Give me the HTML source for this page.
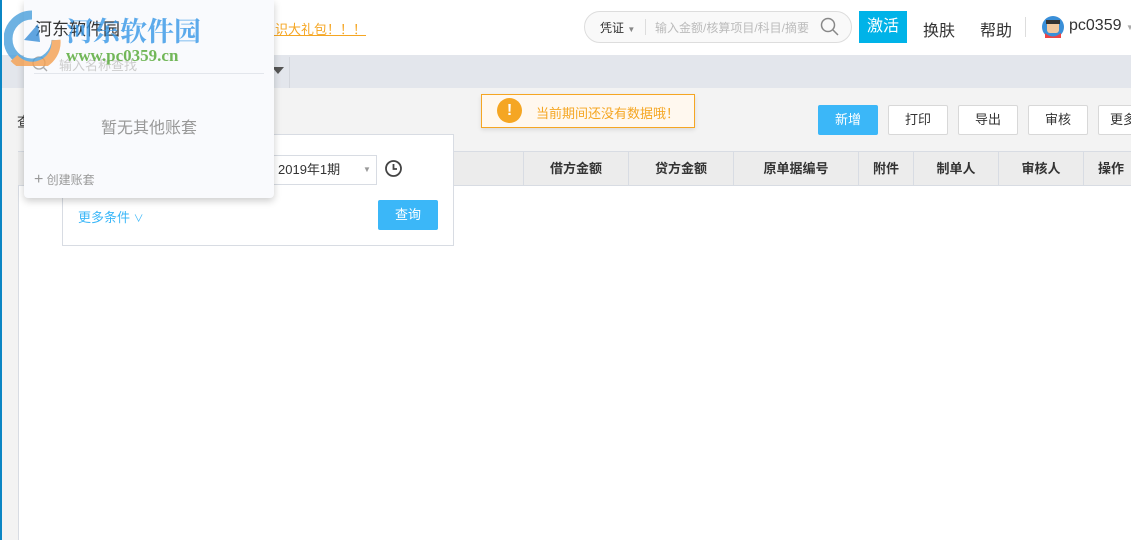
<!DOCTYPE html>
<html><head><meta charset="utf-8"><style>
*{margin:0;padding:0;box-sizing:border-box}
body{width:1131px;height:540px;overflow:hidden;background:#fff;font-family:"Liberation Sans","Noto Sans CJK SC",sans-serif;position:relative;color:#333}
.abs{position:absolute;white-space:nowrap}
</style></head><body>
<div class="abs" style="left:0;top:0;width:2px;height:540px;background:#0b86c4;z-index:5"></div>
<!-- header -->
<div class="abs" style="left:0;top:0;width:1131px;height:55px;background:#fff"></div>
<div class="abs" style="left:140px;top:19px;font-size:13px;color:#999">2019年第1期</div>
<div class="abs" style="left:262px;top:19px;font-size:13px;color:#f5a623;text-decoration:underline">知识大礼包！！！</div>
<div class="abs" style="left:584px;top:11px;width:268px;height:32px;border:1px solid #ddd;border-radius:16px;background:#f9f9f9"></div>
<div class="abs" style="left:600px;top:19px;font-size:12px;color:#333">凭证 <span style="font-size:8px;color:#888">▼</span></div>
<div class="abs" style="left:645px;top:19px;width:1px;height:16px;background:#ddd"></div>
<div class="abs" style="left:655px;top:19px;font-size:12px;color:#bbb">输入金额/核算项目/科目/摘要</div>
<svg class="abs" style="left:820px;top:17px" width="20" height="20"><circle cx="8" cy="8" r="6.5" fill="none" stroke="#888" stroke-width="1.5"/><line x1="13" y1="13" x2="18" y2="18" stroke="#888" stroke-width="1.5"/></svg>
<div class="abs" style="left:859px;top:11px;width:48px;height:32px;background:#00b3e8;color:#fff;font-size:16px;line-height:32px;text-align:center">激活</div>
<div class="abs" style="left:923px;top:17px;font-size:16px;color:#333">换肤</div>
<div class="abs" style="left:980px;top:17px;font-size:16px;color:#333">帮助</div>
<div class="abs" style="left:1025px;top:17px;width:1px;height:20px;background:#ddd"></div>
<svg class="abs" style="left:1042px;top:16px" width="22" height="22"><circle cx="11" cy="11" r="11" fill="#3a8fd8"/><rect x="5" y="5" width="12" height="12" rx="3" fill="#f2c9a0"/><rect x="4" y="4" width="14" height="4" fill="#333"/><path d="M3 17 Q11 24 19 17 L19 22 L3 22Z" fill="#e44"/></svg>
<div class="abs" style="left:1069px;top:17px;font-size:16px;color:#333">pc0359 <span style="font-size:8px;color:#aaa">▼</span></div>
<!-- grey bar -->
<div class="abs" style="left:0;top:55px;width:1131px;height:33px;background:#e3e6ec"></div>
<div class="abs" style="left:272px;top:67px;width:0;height:0;border-left:6px solid transparent;border-right:6px solid transparent;border-top:7px solid #555"></div>
<div class="abs" style="left:289px;top:57px;width:1px;height:31px;background:#d4d7dd"></div>
<!-- content -->
<div class="abs" style="left:2px;top:88px;width:1129px;height:452px;background:#f3f3f3"></div>
<div class="abs" style="left:17px;top:112px;font-size:14px;color:#333">查</div>
<div class="abs" style="left:481px;top:94px;width:214px;height:34px;border:1px solid #f5a623;background:#fff8ef;box-shadow:0 2px 4px rgba(0,0,0,.1)"></div>
<div class="abs" style="left:497px;top:98px;width:25px;height:25px;border-radius:50%;background:#f5a623;color:#fff;font-weight:bold;text-align:center;line-height:25px;font-size:16px">!</div>
<div class="abs" style="left:536px;top:103px;font-size:13px;color:#f5a623">当前期间还没有数据哦！</div>
<div class="abs" style="left:818px;top:105px;width:60px;height:30px;background:#3bb7f8;border-radius:2px;color:#fff;font-size:13px;text-align:center;line-height:30px">新增</div>
<div class="abs" style="left:888px;top:105px;width:60px;height:30px;background:#fff;border:1px solid #d8d8d8;border-radius:2px;font-size:13px;text-align:center;line-height:28px">打印</div>
<div class="abs" style="left:958px;top:105px;width:60px;height:30px;background:#fff;border:1px solid #d8d8d8;border-radius:2px;font-size:13px;text-align:center;line-height:28px">导出</div>
<div class="abs" style="left:1028px;top:105px;width:60px;height:30px;background:#fff;border:1px solid #d8d8d8;border-radius:2px;font-size:13px;text-align:center;line-height:28px">审核</div>
<div class="abs" style="left:1098px;top:105px;width:60px;height:30px;background:#fff;border:1px solid #d8d8d8;border-radius:2px;font-size:13px;line-height:28px;padding-left:11px">更多</div>
<!-- table -->
<div class="abs" style="left:18px;top:151px;width:1113px;height:389px;background:#fff;border-left:1px solid #d8dce3"></div>
<div class="abs" style="left:18px;top:151px;width:1113px;height:35px;background:#ececec;border-top:1px solid #d8dce3;border-bottom:1px solid #d8dce3;font-size:13px;font-weight:bold;color:#333">
<div class="abs" style="left:505px;top:0;width:105px;height:33px;border-left:1px solid #d8dce3;text-align:center;line-height:33px">借方金额</div>
<div class="abs" style="left:610px;top:0;width:105px;height:33px;border-left:1px solid #d8dce3;text-align:center;line-height:33px">贷方金额</div>
<div class="abs" style="left:715px;top:0;width:125px;height:33px;border-left:1px solid #d8dce3;text-align:center;line-height:33px">原单据编号</div>
<div class="abs" style="left:840px;top:0;width:55px;height:33px;border-left:1px solid #d8dce3;text-align:center;line-height:33px">附件</div>
<div class="abs" style="left:895px;top:0;width:85px;height:33px;border-left:1px solid #d8dce3;text-align:center;line-height:33px">制单人</div>
<div class="abs" style="left:980px;top:0;width:85px;height:33px;border-left:1px solid #d8dce3;text-align:center;line-height:33px">审核人</div>
<div class="abs" style="left:1065px;top:0;width:55px;height:33px;border-left:1px solid #d8dce3;text-align:center;line-height:33px">操作</div>
</div>
<!-- query panel -->
<div class="abs" style="left:62px;top:134px;width:392px;height:112px;background:#fff;border:1px solid #d8dce3"></div>
<div class="abs" style="left:270px;top:155px;width:107px;height:30px;border:1px solid #d8dce3;background:#fff;font-size:13px;line-height:28px;padding-left:7px">2019年1期<span class="abs" style="left:92px;top:0;font-size:8px;color:#999">▼</span></div>
<svg class="abs" style="left:384px;top:159px" width="19" height="19"><circle cx="9.5" cy="9.5" r="7.5" fill="none" stroke="#444" stroke-width="1.8"/><path d="M9.5 5 V10 H13" fill="none" stroke="#444" stroke-width="1.8"/></svg>
<div class="abs" style="left:78px;top:207px;font-size:13px;color:#3bb7f8">更多条件 <span style="font-size:10px">∨</span></div>
<div class="abs" style="left:378px;top:200px;width:60px;height:30px;background:#3bb7f8;border-radius:2px;color:#fff;font-size:13px;text-align:center;line-height:30px">查询</div>
<!-- dropdown -->
<div class="abs" style="left:24px;top:0;width:250px;height:198px;background:#f9fafd;border-radius:0 0 4px 4px;box-shadow:0 3px 8px rgba(0,0,0,.2);z-index:3">
<div class="abs" style="left:11px;top:15px;font-size:17px;color:#333">河东软件园</div>
<svg class="abs" style="left:7px;top:55px" width="18" height="18"><circle cx="8" cy="8" r="6" fill="none" stroke="#aaa" stroke-width="1.3"/><line x1="12" y1="12" x2="16" y2="16" stroke="#aaa" stroke-width="1.3"/></svg>
<div class="abs" style="left:35px;top:55px;font-size:13px;color:#ccc">输入名称查找</div>
<div class="abs" style="left:10px;top:73px;width:230px;height:1px;background:#e3e6ec"></div>
<div class="abs" style="left:0;top:114px;width:250px;text-align:center;font-size:16px;color:#999">暂无其他账套</div>
<div class="abs" style="left:10px;top:171px;font-size:12px;color:#999"><span style="font-size:16px">+</span> 创建账套</div>
</div>
<!-- watermark -->
<div class="abs" style="left:4px;top:10px;z-index:4;opacity:.8">
<svg width="58" height="56"><path d="M28 5 A24 24 0 1 0 52 30" fill="none" stroke="#4aa0dc" stroke-width="9"/><path d="M10 48 A24 24 0 0 0 52 30" fill="none" stroke="#f5a050" stroke-width="9"/><path d="M20 30 L34 14 L36 32Z" fill="#3a8fd8"/></svg>
</div>
<div class="abs" style="left:66px;top:10px;z-index:4;font-size:27px;font-weight:bold;color:rgba(52,150,230,.8);font-family:'Noto Serif CJK SC',serif">河东软件园</div>
<div class="abs" style="left:66px;top:46px;z-index:4;font-size:17px;font-weight:bold;color:rgba(90,170,60,.85);font-family:'Liberation Serif',serif">www.pc0359.cn</div>
</body></html>
